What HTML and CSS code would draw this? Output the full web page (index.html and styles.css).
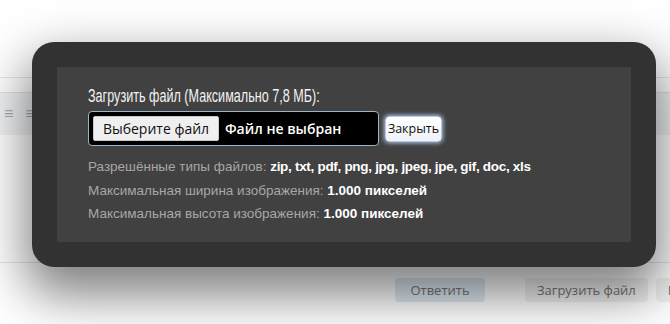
FILE: index.html
```html
<!DOCTYPE html>
<html lang="ru">
<head>
    <meta charset="UTF-8">
    <title>Загрузить файл</title>
    <link rel="stylesheet" href="styles.css">
</head>
<body>
    <div class="page">
        <div class="editor">
            <div class="toolbar">
                <span class="tool">&#8801;</span>
                <span class="tool">&#8801;</span>
                <span class="tool">&#8801;</span>
            </div>
            <div class="editor-body"></div>
        </div>
        <div class="actions">
            <button class="act act-primary">Ответить</button>
            <button class="act">Загрузить файл</button>
            <button class="act">Ред</button>
        </div>
    </div>

    <div class="modal">
        <div class="modal-inner">
            <h2 class="modal-title"><span>Загрузить файл (Максимально 7,8 МБ):</span></h2>
            <div class="upload-row">
                <label class="file-box">
                    <span class="file-btn">Выберите файл</span>
                    <span class="file-name">Файл не выбран</span>
                </label>
                <button class="close-btn">Закрыть</button>
            </div>
            <p class="info">Разрешённые типы файлов: <b class="tight">zip, txt, pdf, png, jpg, jpeg, jpe, gif, doc, xls</b></p>
            <p class="info">Максимальная ширина изображения: <b>1.000 пикселей</b></p>
            <p class="info">Максимальная высота изображения: <b>1.000 пикселей</b></p>
        </div>
    </div>
</body>
</html>
```
FILE: styles.css
```css
body {
    margin: 0;
    background: #fff;
    font-family: "Liberation Sans", Arial, sans-serif;
    overflow: hidden;
}
.page {
    padding-top: 77px;
}
.editor {
    border-top: 1px solid #e6e6e6;
    border-bottom: 1px solid #dfe6ea;
}
.toolbar {
    margin-top: 14px;
    border-top: 1px solid #dbe4ec;
    background: #f1f3f5;
    height: 42px;
    display: flex;
    align-items: center;
    gap: 12px;
    padding-left: 4px;
    color: #aab;
    font-size: 16px;
}
.editor-body {
    height: 127px;
}
.actions {
    display: flex;
    gap: 8px;
    padding: 15px 0 0 395px;
    overflow: hidden;
}
.act {
    font-family: "Open Sans", sans-serif;
    font-size: 13px;
    color: #777;
    background: #f2f2f2;
    border: none;
    border-radius: 4px;
    height: 24px;
    padding: 0 12px;
    white-space: nowrap;
    flex-shrink: 0;
}
.act-primary {
    width: 90px;
    box-sizing: border-box;
    background: #e0ebf3;
    margin-right: 32px;
}
.modal {
    position: absolute;
    left: 32px;
    top: 42px;
    width: 624px;
    height: 225px;
    box-sizing: border-box;
    padding: 25px;
    background: #323232;
    border-radius: 22px;
    box-shadow: 0 22px 50px 6px rgba(0, 0, 0, 0.5);
}
.modal-inner {
    height: 100%;
    background: #414141;
    padding: 20px 31px 0;
    box-sizing: border-box;
}
.modal-title {
    margin: 0 0 6px;
    font-size: 17.5px;
    font-weight: normal;
    color: #f2f2f2;
    line-height: 18px;
    white-space: nowrap;
}
.modal-title span {
    display: inline-block;
    transform: scaleX(0.72);
    transform-origin: left center;
}
.upload-row {
    display: flex;
    align-items: center;
    gap: 6px;
    margin-bottom: 9px;
}
.file-box {
    display: flex;
    align-items: center;
    width: 291px;
    height: 35px;
    box-sizing: border-box;
    background: #000;
    border: 1px solid #9cb6c8;
    border-radius: 4px;
    padding-left: 4px;
}
.file-btn {
    font-family: "Open Sans", sans-serif;
    font-size: 14px;
    color: #111;
    background: #efefef;
    border: 1px solid #c8c8c8;
    height: 25px;
    width: 126px;
    box-sizing: border-box;
    display: flex;
    align-items: center;
    justify-content: center;
    border-radius: 2px;
}
.file-name {
    font-family: "Open Sans", sans-serif;
    font-size: 14px;
    font-weight: 600;
    color: #fff;
    margin-left: 6px;
}
.close-btn {
    font-family: "Open Sans", sans-serif;
    font-size: 12.5px;
    color: #111;
    background: linear-gradient(#fff, #eef1f6);
    border: 1px solid #b9c8dc;
    border-radius: 4px;
    height: 26px;
    width: 57px;
    padding: 0;
    box-shadow: 0 0 4px 1px #a9c7ee;
}
.info {
    margin: 0;
    font-size: 13.5px;
    line-height: 23.5px;
    color: #a7a7a7;
    white-space: nowrap;
}
.info b {
    color: #fff;
    font-weight: bold;
}
.info .tight {
    letter-spacing: -0.3px;
}
```
